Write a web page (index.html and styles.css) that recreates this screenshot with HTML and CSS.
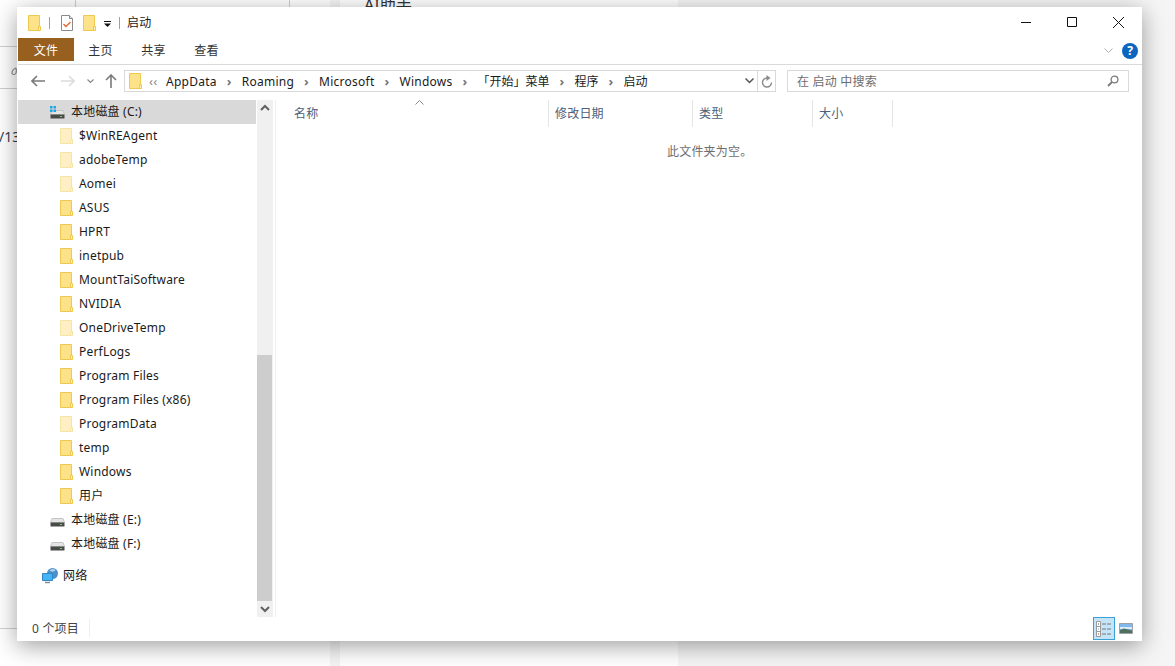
FILE: index.html
```html
<!DOCTYPE html>
<html lang="zh-CN">
<head>
<meta charset="UTF-8">
<title>启动</title>
<link rel="stylesheet" href="styles.css">
</head>
<body>
<svg class="defs" width="0" height="0">
    <symbol id="folder" viewBox="0 0 13 16">
        <path d="M.5.5h11v15H.5z" fill="#fee28a" stroke="#eec94f"/>
        <path d="M10.5 11.5h2v4h-2z" fill="#fff0b8" stroke="#eec94f"/>
    </symbol>
    <symbol id="drive" viewBox="0 0 15 9">
        <path d="M2 .5h11l1.5 4h-14z" fill="#e4e4e4" stroke="#c4c4c4"/>
        <path d="M.5 4.5h14v4H.5z" fill="#4a4a4a"/>
        <path d="M10 6h2v1h-2z" fill="#5fe05f"/>
    </symbol>
</svg>

<div class="back back-left">
    <span class="back-line back-line1"></span>
    <span class="back-line back-line2"></span>
    <span class="back-line back-line3"></span>
    <span class="back-tick back-tick1"></span>
    <span class="back-tick back-tick2"></span>
    <svg class="back-icon" viewBox="0 0 6 9"><path d="M5 1C2 2 1 4 1 6c0 2 3 2 4 0 .5-1 .5-2 0-5" fill="none" stroke="#8a8f98" stroke-width="1.2"/></svg>
    <span class="back-date">/13</span>
</div>
<div class="back back-mid"><span class="back-title">AI助手</span></div>

<div class="window">
    <div class="titlebar">
        <svg class="qa-folder"><use href="#folder"/></svg>
        <span class="qa-sep"></span>
        <svg class="qa-check" viewBox="0 0 12 16">
            <path d="M.5.5h8l3 3v12H.5z" fill="#fff" stroke="#8a8a8a"/>
            <path d="M8.5.5v3h3" fill="#e8e8e8" stroke="#8a8a8a"/>
            <path d="M2.5 9l2.5 2.5L9.500 7" fill="none" stroke="#e9652f" stroke-width="1.4"/>
        </svg>
        <svg class="qa-folder2"><use href="#folder"/></svg>
        <svg class="qa-drop" viewBox="0 0 7 6">
            <path d="M0 0h7v1H0z" fill="#111"/>
            <path d="M0 2.500h7L3.500 6z" fill="#111"/>
        </svg>
        <span class="qa-sep qa-sep2"></span>
        <span class="title">启动</span>
        <div class="win-btns">
            <svg class="win-btn" viewBox="0 0 46 31"><path d="M18 15.500h10" stroke="#111"/></svg>
            <svg class="win-btn" viewBox="0 0 46 31"><path d="M18.500 10.500h9v9h-9z" fill="none" stroke="#111"/></svg>
            <svg class="win-btn" viewBox="0 0 46 31"><path d="M18 10l11 11M29 10L18 21" stroke="#111"/></svg>
        </div>
    </div>

    <div class="ribbon">
        <span class="tab tab-file">文件</span>
        <span class="tab">主页</span>
        <span class="tab">共享</span>
        <span class="tab">查看</span>
        <svg class="ribbon-chevron" viewBox="0 0 9 5"><path d="M.5.5l4 4 4-4" fill="none" stroke="#b0b0b0"/></svg>
        <span class="help">?</span>
    </div>

    <div class="addressbar">
        <div class="nav-btns">
            <svg class="arrow-back" viewBox="0 0 14 12"><path d="M6 1L1 6l5 5M1 6h13" fill="none" stroke="#7a7a7a" stroke-width="1.6"/></svg>
            <svg class="arrow-fwd" viewBox="0 0 14 12"><path d="M8 1l5 5-5 5M13 6H0" fill="none" stroke="#dcdcdc" stroke-width="1.6"/></svg>
            <svg class="arrow-recent" viewBox="0 0 7 5"><path d="M.5.5l3 3 3-3" fill="none" stroke="#8a8a8a" stroke-width="1.2"/></svg>
            <svg class="arrow-up" viewBox="0 0 12 14"><path d="M1 6l5-5 5 5M6 1v13" fill="none" stroke="#7a7a7a" stroke-width="1.6"/></svg>
        </div>
        <div class="address">
            <svg class="addr-folder"><use href="#folder"/></svg>
            <span class="crumb-more">‹‹</span>
            <span class="crumb">AppData</span><span class="crumb-sep">›</span>
            <span class="crumb">Roaming</span><span class="crumb-sep">›</span>
            <span class="crumb">Microsoft</span><span class="crumb-sep">›</span>
            <span class="crumb">Windows</span><span class="crumb-sep">›</span>
            <span class="crumb crumb-cjk">「开始」菜单</span><span class="crumb-sep">›</span>
            <span class="crumb crumb-cjk">程序</span><span class="crumb-sep">›</span>
            <span class="crumb crumb-cjk">启动</span>
            <svg class="addr-drop" viewBox="0 0 9 6"><path d="M.5.5l4 4 4-4" fill="none" stroke="#555" stroke-width="1.5"/></svg>
            <span class="addr-refresh">
                <svg viewBox="0 0 12 13"><path d="M6 3a4.500 4.500 0 1 0 4.500 4.500" fill="none" stroke="#8a8a8a" stroke-width="1.400"/><path d="M5.500 0l4 3-4 3z" fill="#8a8a8a"/></svg>
            </span>
        </div>
        <div class="search">
            <span>在 启动 中搜索</span>
            <svg viewBox="0 0 12 12"><circle cx="7.500" cy="4.500" r="3.400" fill="none" stroke="#7a7a7a" stroke-width="1.300"/><path d="M5 7l-4 4" stroke="#7a7a7a" stroke-width="1.800"/></svg>
        </div>
    </div>

    <div class="main">
        <div class="navpane">
            <div class="tree">
                <div class="row drive selected">
                    <svg class="win-logo" viewBox="0 0 6 6"><path d="M0 0h2.500v2.500H0zM3.500 0H6v2.500H3.500zM0 3.500h2.500V6H0zM3.500 3.500H6V6H3.500z" fill="#1ea5e6"/></svg>
                    <svg class="drive-icon"><use href="#drive"/></svg><span>本地磁盘 (C:)</span>
                </div>
                <div class="row sub"><svg class="folder faded"><use href="#folder"/></svg><span>$WinREAgent</span></div>
                <div class="row sub"><svg class="folder faded"><use href="#folder"/></svg><span>adobeTemp</span></div>
                <div class="row sub"><svg class="folder faded"><use href="#folder"/></svg><span>Aomei</span></div>
                <div class="row sub"><svg class="folder"><use href="#folder"/></svg><span>ASUS</span></div>
                <div class="row sub"><svg class="folder"><use href="#folder"/></svg><span>HPRT</span></div>
                <div class="row sub"><svg class="folder"><use href="#folder"/></svg><span>inetpub</span></div>
                <div class="row sub"><svg class="folder"><use href="#folder"/></svg><span>MountTaiSoftware</span></div>
                <div class="row sub"><svg class="folder"><use href="#folder"/></svg><span>NVIDIA</span></div>
                <div class="row sub"><svg class="folder faded"><use href="#folder"/></svg><span>OneDriveTemp</span></div>
                <div class="row sub"><svg class="folder"><use href="#folder"/></svg><span>PerfLogs</span></div>
                <div class="row sub"><svg class="folder"><use href="#folder"/></svg><span>Program Files</span></div>
                <div class="row sub"><svg class="folder"><use href="#folder"/></svg><span>Program Files (x86)</span></div>
                <div class="row sub"><svg class="folder faded"><use href="#folder"/></svg><span>ProgramData</span></div>
                <div class="row sub"><svg class="folder"><use href="#folder"/></svg><span>temp</span></div>
                <div class="row sub"><svg class="folder"><use href="#folder"/></svg><span>Windows</span></div>
                <div class="row sub"><svg class="folder"><use href="#folder"/></svg><span>用户</span></div>
                <div class="row drive"><svg class="drive-icon"><use href="#drive"/></svg><span>本地磁盘 (E:)</span></div>
                <div class="row drive"><svg class="drive-icon"><use href="#drive"/></svg><span>本地磁盘 (F:)</span></div>
                <div class="row network">
                    <svg class="net-icon" viewBox="0 0 16 16">
                        <circle cx="10.500" cy="5.500" r="5.500" fill="#4f8fc8"/>
                        <path d="M7.500 2.500c2-2 5-2 6 0-2 1.500-4 1.500-6 0z" fill="#a9d2ee"/>
                        <path d="M.5 5.500h10v7H.5z" fill="#45b4f5" stroke="#2f86c6"/>
                        <path d="M3 14.500h5" stroke="#7a8a96" stroke-width="1.400"/>
                    </svg><span>网络</span>
                </div>
            </div>
            <div class="scrollbar">
                <svg class="sb-btn" viewBox="0 0 16 16"><path d="M4 10l4-4 4 4" fill="none" stroke="#606060" stroke-width="2"/></svg>
                <div class="sb-track"></div>
                <div class="sb-thumb"></div>
                <svg class="sb-btn" viewBox="0 0 16 16"><path d="M4 6l4 4 4-4" fill="none" stroke="#606060" stroke-width="2"/></svg>
            </div>
        </div>

        <div class="content">
            <div class="columns">
                <svg class="sort-caret" viewBox="0 0 9 5"><path d="M.5 4.500l4-4 4 4" fill="none" stroke="#8a8a8a"/></svg>
                <span class="col col-name">名称</span>
                <span class="col col-date">修改日期</span>
                <span class="col col-type">类型</span>
                <span class="col col-size">大小</span>
            </div>
            <div class="empty">此文件夹为空。</div>
        </div>
    </div>

    <div class="statusbar">
        <span class="count">0 个项目</span>
        <span class="view-btn view-active">
            <svg viewBox="0 0 16 16">
                <path d="M.5.5h4v15h-4z" fill="#fff" stroke="#9a9a9a"/>
                <path d="M.5 5.500h4M.5 10.500h4" stroke="#9a9a9a"/>
                <path d="M2 2.500h1v1H2z" fill="#555"/>
                <path d="M2 7.500h1v1H2z" fill="#6aa7cc"/>
                <path d="M2 12.500h1v1H2z" fill="#b0463c"/>
                <path d="M6 3h4M11 3h4M6 8h4M11 8h4M6 13h4M11 13h4" stroke="#777"/>
            </svg>
        </span>
        <svg class="view-large" viewBox="0 0 14 11">
            <path d="M.5.5h13v10H.5z" fill="#7fb9ee" stroke="#a0a0a0"/>
            <path d="M1 4h12v2H1z" fill="#dcebf8"/>
            <path d="M1 7l4-1.500 8 2V10H1z" fill="#4f6f5f"/>
        </svg>
    </div>
</div>
</body>
</html>
```

FILE: styles.css
```css
* {
    box-sizing: border-box;
}
html, body {
    height: 100%;
}
body {
    margin: 0;
    overflow: hidden;
    position: relative;
    background-color: #f5f5f5;
    font-family: "Noto Sans", "Noto Sans CJK SC", sans-serif;
    font-size: 12px;
    letter-spacing: 0.2px;
    color: #1a1a1a;
}
.defs {
    position: absolute;
}

/* windows behind the explorer */
.back {
    position: absolute;
    top: 0;
    height: 666px;
    background-color: #fff;
}
.back-left {
    left: 0;
    width: 330px;
}
.back-mid {
    left: 340px;
    width: 338px;
}
.back-line {
    position: absolute;
    left: 0;
    width: 17px;
    height: 1px;
    background-color: #d0d0d0;
}
.back-line1 {
    top: 46px;
}
.back-line2 {
    top: 88px;
}
.back-line3 {
    top: 628px;
}
.back-tick {
    position: absolute;
    top: 0;
    width: 1px;
    height: 7px;
    background-color: #cfcfcf;
}
.back-tick1 {
    left: 75px;
}
.back-tick2 {
    left: 289px;
}
.back-icon {
    position: absolute;
    left: 11px;
    top: 67px;
    width: 6px;
    height: 9px;
}
.back-date {
    position: absolute;
    left: -1px;
    top: 127px;
    font-size: 14px;
    letter-spacing: 0;
    color: #2f3e52;
}
.back-title {
    position: absolute;
    left: 24px;
    top: -8px;
    font-size: 16px;
    letter-spacing: 0;
    color: #333;
}

.window {
    position: absolute;
    left: 17px;
    top: 7px;
    width: 1125px;
    height: 634px;
    display: flex;
    flex-direction: column;
    background-color: #fff;
    box-shadow: 0 5px 22px rgba(0, 0, 0, 0.38);
}

.titlebar {
    height: 31px;
    display: flex;
    align-items: center;
    padding-left: 11px;
}
.qa-folder, .qa-folder2 {
    width: 13px;
    height: 16px;
}
.qa-sep {
    width: 1px;
    height: 12px;
    margin-left: 8px;
    background-color: #a0a0a0;
}
.qa-check {
    width: 12px;
    height: 16px;
    margin-left: 11px;
}
.qa-folder2 {
    margin-left: 10px;
}
.qa-drop {
    width: 7px;
    height: 6px;
    margin-left: 8px;
    margin-top: 3px;
}
.qa-sep2 {
    margin-left: 8px;
}
.title {
    margin-left: 7px;
    margin-bottom: 2px;
}
.win-btns {
    margin-left: auto;
    margin-right: 1px;
    display: flex;
}
.win-btn {
    width: 46px;
    height: 31px;
}

.ribbon {
    height: 27px;
    margin-left: 1px;
    padding-bottom: 3px;
    display: flex;
    align-items: stretch;
    border-bottom: 1px solid #dadada;
}
.tab {
    width: 53px;
    display: flex;
    align-items: center;
    justify-content: center;
    color: #333;
}
.tab-file {
    width: 56px;
    background-color: #98601f;
    color: #fff;
}
.ribbon-chevron {
    width: 9px;
    height: 5px;
    margin: 10px 0 0 auto;
}
.help {
    width: 16px;
    height: 16px;
    margin: 5px 4px 0 9px;
    border-radius: 50%;
    background-color: #0c66c0;
    color: #fff;
    font-weight: bold;
    font-size: 12px;
    letter-spacing: 0;
    line-height: 16px;
    text-align: center;
}

.addressbar {
    height: 35px;
    display: flex;
    align-items: center;
    padding: 5px 13px 8px 0;
}
.nav-btns {
    width: 107px;
    display: flex;
    align-items: center;
    padding-left: 14px;
}
.arrow-back, .arrow-fwd {
    width: 14px;
    height: 12px;
}
.arrow-fwd {
    margin-left: 16px;
}
.arrow-recent {
    width: 7px;
    height: 5px;
    margin-left: 12px;
}
.arrow-up {
    width: 12px;
    height: 14px;
    margin-left: 11px;
}
.address {
    width: 652px;
    height: 22px;
    display: flex;
    align-items: center;
    border: 1px solid #d9d9d9;
    padding-left: 4px;
}
.addr-folder {
    width: 13px;
    height: 16px;
}
.crumb {
    white-space: nowrap;
    letter-spacing: 0.25px;
}
.crumb-cjk {
    letter-spacing: 0;
}
.crumb-more {
    margin-left: 7px;
    width: 17px;
    color: #888;
    font-size: 13px;
}
.crumb-sep {
    width: 15px;
    margin-left: 10px;
    color: #777;
    font-size: 13px;
    font-weight: bold;
}
.addr-drop {
    width: 9px;
    height: 6px;
    margin-left: auto;
}
.addr-refresh {
    width: 18px;
    height: 20px;
    margin-left: 3px;
    display: flex;
    align-items: center;
    justify-content: center;
    border-left: 1px solid #d9d9d9;
}
.addr-refresh svg {
    width: 12px;
    height: 13px;
}
.search {
    width: 342px;
    height: 22px;
    margin-left: auto;
    display: flex;
    align-items: center;
    justify-content: space-between;
    padding: 0 9px;
    border: 1px solid #d9d9d9;
    color: #6d6d6d;
}
.search svg {
    width: 12px;
    height: 12px;
}

.main {
    flex: 1;
    min-height: 0;
    display: flex;
    margin-left: 1px;
}
.navpane {
    width: 258px;
    display: flex;
    border-right: 1px solid #f0f0f0;
}
.tree {
    flex: 1;
    padding-right: 1px;
}
.row {
    height: 24px;
    display: flex;
    align-items: center;
    position: relative;
    padding-bottom: 2px;
    white-space: pre;
}
.row svg {
    margin-top: 2px;
}
.selected {
    background-color: #d9d9d9;
}
.drive {
    padding-left: 32px;
}
.row .drive-icon {
    width: 15px;
    height: 9px;
    margin-top: 7px;
    margin-right: 6px;
}
.row .win-logo {
    position: absolute;
    left: 32px;
    top: 6px;
    width: 6px;
    height: 6px;
    margin: 0;
}
.sub {
    padding-left: 42px;
}
.folder {
    width: 13px;
    height: 16px;
    margin-right: 6px;
}
.faded {
    opacity: 0.5;
}
.network {
    margin-top: 8px;
    padding-left: 24px;
}
.net-icon {
    width: 16px;
    height: 16px;
    margin-right: 5px;
}
.scrollbar {
    width: 16px;
    margin-right: 2px;
    display: flex;
    flex-direction: column;
    background-color: #f0f0f0;
}
.sb-btn {
    width: 16px;
    height: 16px;
}
.sb-track {
    height: 239px;
}
.sb-thumb {
    flex: 1;
    margin-right: 1px;
    background-color: #cdcdcd;
}

.content {
    flex: 1;
}
.columns {
    height: 27px;
    display: flex;
    position: relative;
}
.sort-caret {
    position: absolute;
    left: 139px;
    top: 0;
    width: 9px;
    height: 5px;
}
.col {
    display: flex;
    align-items: center;
    padding: 0 0 1px 6px;
    border-right: 1px solid #e5e5e5;
    color: #4c607a;
}
.col-name {
    width: 273px;
    padding-left: 18px;
}
.col-date {
    width: 144px;
}
.col-type {
    width: 120px;
}
.col-size {
    width: 80px;
}
.empty {
    margin-top: 15px;
    padding-left: 391px;
    color: #6d6d6d;
}

.statusbar {
    height: 24px;
    display: flex;
    align-items: center;
    padding: 0 9px 1px 15px;
    color: #444;
}
.count {
    width: 58px;
    margin-bottom: 2px;
    border-right: 1px solid #eee;
}
.view-btn {
    width: 22px;
    height: 23px;
    margin-left: auto;
    display: flex;
    align-items: center;
    justify-content: center;
    border: 1px solid #3aa0d8;
    background-color: #c5e4f7;
}
.view-btn svg {
    width: 16px;
    height: 16px;
}
.view-large {
    width: 14px;
    height: 11px;
    margin-left: 4px;
}
```
